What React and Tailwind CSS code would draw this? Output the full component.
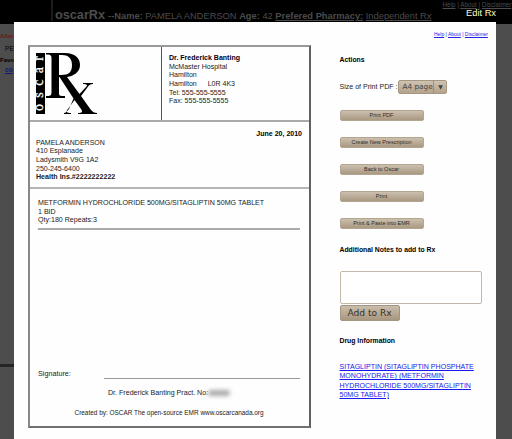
const actions = ["Print PDF", "Create New Prescription", "Back to Oscar", "Print", "Print & Paste into EMR"];

function HelpLinks({ className }) {
  return (
    <div className={`whitespace-nowrap ${className}`}>
      <a className="underline">Help</a> | <a className="underline">About</a> | <a className="underline">Disclaimer</a>
    </div>
  );
}

function Backdrop() {
  return (
    <div className="h-full bg-[#4d4d4d]">
      <header className="flex h-[24px] bg-black text-[#4c4c4c]">
        <div className="ml-[51px] h-[21px] w-[2px] shrink-0 bg-[#1c1c1c]" />
        <div className="mt-[8px] ml-[2px] flex items-baseline whitespace-nowrap text-[9.3px] leading-[14px]">
          <b className="text-[12.7px]">oscarRx</b>
          <span className="ml-[3px]">
            <b>--Name:</b> PAMELA ANDERSON <b>Age:</b> 42 <b className="underline">Prefered Pharmacy:</b>{" "}
            <span className="underline">Independent Rx</span>
          </span>
        </div>
      </header>
      <aside className="w-[14px] whitespace-nowrap text-[6.8px] leading-[9px] text-black">
        <b className="block pt-[7px] text-[6.2px] text-[#7c1018]">Aller</b>
        <div className="mt-[4px] ml-[5px] text-[6.600px]">PE</div>
        <b className="mt-[3px] block text-[6px]">Favo</b>
        <b className="ml-[5px] block text-[#14147c] underline">co</b>
        <div className="mt-[290px] h-[3px] bg-[#242424]" />
      </aside>
    </div>
  );
}

function RxLogo() {
  return (
    <svg className="mt-[6px] ml-[6px] h-[63px] w-[64px]" viewBox="0 0 64 63">
      <rect width="9" height="61" fill="#000" />
      <text transform="translate(7 58) rotate(-90)" fill="#fff" stroke="#fff" strokeWidth="0.25" fontFamily="Liberation Serif, serif" fontSize="14" textLength="55">oscar</text>
      <path fill="#000" d="M10 0H29C39 0 44 5 44 12C44 19 38 23 31 24L43.500 41L50 34C52 32 51 31 47 31V30H57V31C54 31 53 32 51 35L45 43L55 57C57 59 58 60 61 60V61H42V60C46 60 47 59 45 56L38.500 47L32 56C29 59 31 60 35 60V61H28V60C30 60 31 58 33 56L37.500 45.500L23.500 24H23V40C23 43 24 43 29 43V45H10V43C14 43 15.500 43 15.500 39V5C15.500 2 14 1.500 10 1.500ZM23 2V22H25C33 22 36 19 36 12C36 5 32 2 26 2Z" />
    </svg>
  );
}

function Prescription() {
  return (
    <section className="flex h-[383px] w-[283px] shrink-0 flex-col border-t-2 border-r-2 border-b-2 border-l-2 border-t-[#999] border-r-[#606060] border-b-[#707070] border-l-[#888] text-[7.03px] leading-[8.67px] text-[#222]">
      <div className="flex h-[75px] border-b-2 border-[#aaa]">
        <div className="w-[132px] border-r border-[#555]">
          <RxLogo />
        </div>
        <div className="mt-[7px] ml-[7px] whitespace-nowrap">
          <b className="text-[#000020]">Dr. Frederick Banting</b>
          <div>McMaster Hospital</div>
          <div>Hamilton</div>
          <div>Hamilton<span className="ml-[11px]">L0R 4K3</span></div>
          <div>Tel: 555-555-5555</div>
          <div>Fax: 555-555-5555</div>
        </div>
      </div>
      <div className="h-[67px] border-b-2 border-[#b5b5b5] pt-[8px] pl-[6px]">
        <b className="block pr-[7px] text-right text-black">June 20, 2010</b>
        <div>PAMELA ANDERSON</div>
        <div>410 Esplanade</div>
        <div>Ladysmith V9G 1A2</div>
        <div>250-245-6400</div>
        <b className="text-[7.1px]">Health Ins.#2222222222</b>
      </div>
      <div className="mr-[9px] ml-[8px] h-[41px] border-b-2 border-[#aaa] pt-[10px] text-[7.09px] whitespace-nowrap">
        <div>METFORMIN HYDROCHLORIDE 500MG/SITAGLIPTIN 50MG TABLET</div>
        <div>1 BID</div>
        <div>Qty:180 Repeats:3</div>
      </div>
      <div className="mt-[140px] mr-[9px] ml-[8px] flex justify-between text-[7.2px]">
        <span>Signature:</span>
        <div className="h-[9px] w-[196px] border-b border-[#999]" />
      </div>
      <div className="mt-[10px] ml-[78px] flex items-center text-[7.1px] whitespace-nowrap">
        Dr. Frederick Banting Pract. No:
        <span className="h-[6px] w-[22px] rounded-full bg-[#aaa] blur-[2px]" />
      </div>
      <div className="mt-[11px] ml-[44.500px] whitespace-nowrap text-[6.43px]">
        Created by: OSCAR The open-source EMR www.oscarcanada.org
      </div>
    </section>
  );
}

function Actions() {
  return (
    <section className="ml-[28.500px] w-[144px] text-[6.85px] text-[#222]">
      <b className="mt-[10px] block h-[9px] leading-[9px] text-black">Actions</b>
      <div className="mt-[16px] flex h-[14px] items-center whitespace-nowrap text-[7.05px]">
        Size of Print PDF :
        <div className="ml-[1px] flex h-[14px] w-[49px] rounded-[2px] border border-[#a69782] bg-linear-to-b from-[#cec2b2] to-[#b3a38c] font-['DejaVu_Sans',sans-serif] text-[7.3px] leading-[12px] text-[#49443e]">
          <span className="w-[35px] border-r border-[#9c8d78] pl-[3px]">A4 page</span>
          <span className="flex-1 text-center text-[6px]">▼</span>
        </div>
      </div>
      <div className="mt-[16px] flex flex-col gap-[16px]">
        {actions.map((label) => (
          <button key={label} className="h-[11px] w-[84px] rounded-[2px] border border-[#b3a590] bg-linear-to-b from-[#cbbfae] to-[#a99982] text-[5.550px] leading-[9px] whitespace-nowrap text-[#302c28]">
            {label}
          </button>
        ))}
      </div>
      <b className="mt-[16px] block h-[9px] leading-[9px] whitespace-nowrap text-black">Additional Notes to add to Rx</b>
      <div className="mt-[17px] h-[33px] w-[142px] rounded-[2px] border border-[#c3b8a9] bg-white" />
      <button className="mt-[1px] block h-[16px] w-[60px] rounded-[2px] border border-[#a39580] bg-linear-to-b from-[#c9bdac] to-[#a8977f] font-['DejaVu_Sans',sans-serif] text-[9.1px] leading-[14px] text-[#35312d]">
        Add to Rx
      </button>
      <b className="mt-[15px] block h-[9px] leading-[9px] text-black">Drug Information</b>
      <a className="mt-[17px] block text-[7.050px] leading-[9.250px] whitespace-nowrap text-[#1818ee] underline">
        SITAGLIPTIN (SITAGLIPTIN PHOSPHATE<br />
        MONOHYDRATE) (METFORMIN<br />
        HYDROCHLORIDE 500MG/SITAGLIPTIN<br />
        50MG TABLET)
      </a>
    </section>
  );
}

export default function App() {
  return (
    <main className="relative h-[439px] w-[512px] overflow-hidden font-['Liberation_Sans',Arial,sans-serif]">
      <Backdrop />
      <HelpLinks className="absolute top-0 left-[442.500px] text-[6.3px] leading-[9px] text-[#4c4c4c]" />
      <div className="absolute top-[7px] right-[16px] text-[9.3px] leading-[12px] text-[#ffffc4]">Edit Rx</div>
      <div className="absolute top-[22px] left-[14px] h-[417px] w-[482px] bg-[#fefefe]">
        <HelpLinks className="ml-[420px] h-[23px] pt-[10px] text-[4.950px] leading-[6px] text-[#2222e8]" />
        <div className="ml-[14px] flex">
          <Prescription />
          <Actions />
        </div>
      </div>
    </main>
  );
}
